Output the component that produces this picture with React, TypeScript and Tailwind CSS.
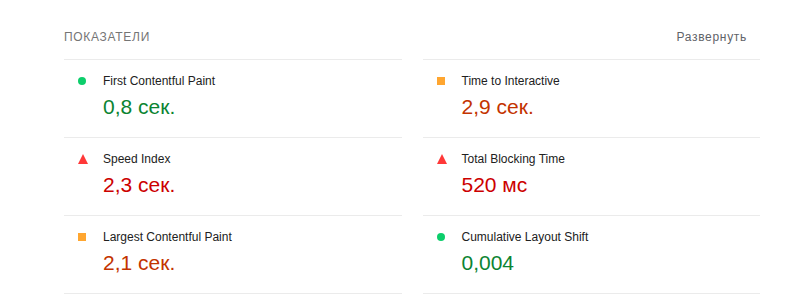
import React from "react";

type Status = "pass" | "average" | "fail";

const metrics: { label: string; value: string; status: Status }[] = [
  { label: "First Contentful Paint", value: "0,8 сек.", status: "pass" },
  { label: "Time to Interactive", value: "2,9 сек.", status: "average" },
  { label: "Speed Index", value: "2,3 сек.", status: "fail" },
  { label: "Total Blocking Time", value: "520 мс", status: "fail" },
  { label: "Largest Contentful Paint", value: "2,1 сек.", status: "average" },
  { label: "Cumulative Layout Shift", value: "0,004", status: "pass" },
];

function Icon({ status }: { status: Status }) {
  if (status === "pass")
    return <span className="block w-[8px] h-[8px] rounded-full bg-[#0cce6b]" />;
  if (status === "average")
    return <span className="block w-[8px] h-[8px] bg-[#ffa630]" />;
  return (
    <svg width="10" height="10" viewBox="0 0 10 10" className="block">
      <polygon points="5,0 10,10 0,10" fill="#ff3838" />
    </svg>
  );
}

const valueColor: Record<Status, string> = {
  pass: "text-[#0b8432]",
  average: "text-[#c33300]",
  fail: "text-[#cc0000]",
};

export default function App() {
  return (
    <div
      className="w-[787px] h-[308px] bg-white pt-[28px] pl-[64px] pr-[27px]"
      style={{ fontFamily: '"Liberation Sans", Arial, sans-serif' }}
    >
      <div className="flex items-center justify-between pr-[13px] mb-[13px] leading-[18px] text-[12px]">
        <span className="uppercase tracking-[0.7px] text-[#757575]">Показатели</span>
        <span className="text-[#5f6368] tracking-[0.7px]">Развернуть</span>
      </div>
      <div className="grid grid-cols-2 gap-x-[21px]">
        {metrics.map((m, i) => (
          <div
            key={m.label}
            className={`border-t border-[#ebebeb] pt-[12px] pb-[16px] ${i >= 4 ? "border-b" : ""}`}
          >
            <div className="flex items-center leading-[18px] text-[12px] text-[#212121]">
              <div className="w-[39px] pl-[14px] flex items-center">
                <Icon status={m.status} />
              </div>
              <span>{m.label}</span>
            </div>
            <div className={`mt-[3px] pl-[39px] text-[21px] leading-[28px] ${valueColor[m.status]}`}>
              {m.value}
            </div>
          </div>
        ))}
      </div>
    </div>
  );
}
